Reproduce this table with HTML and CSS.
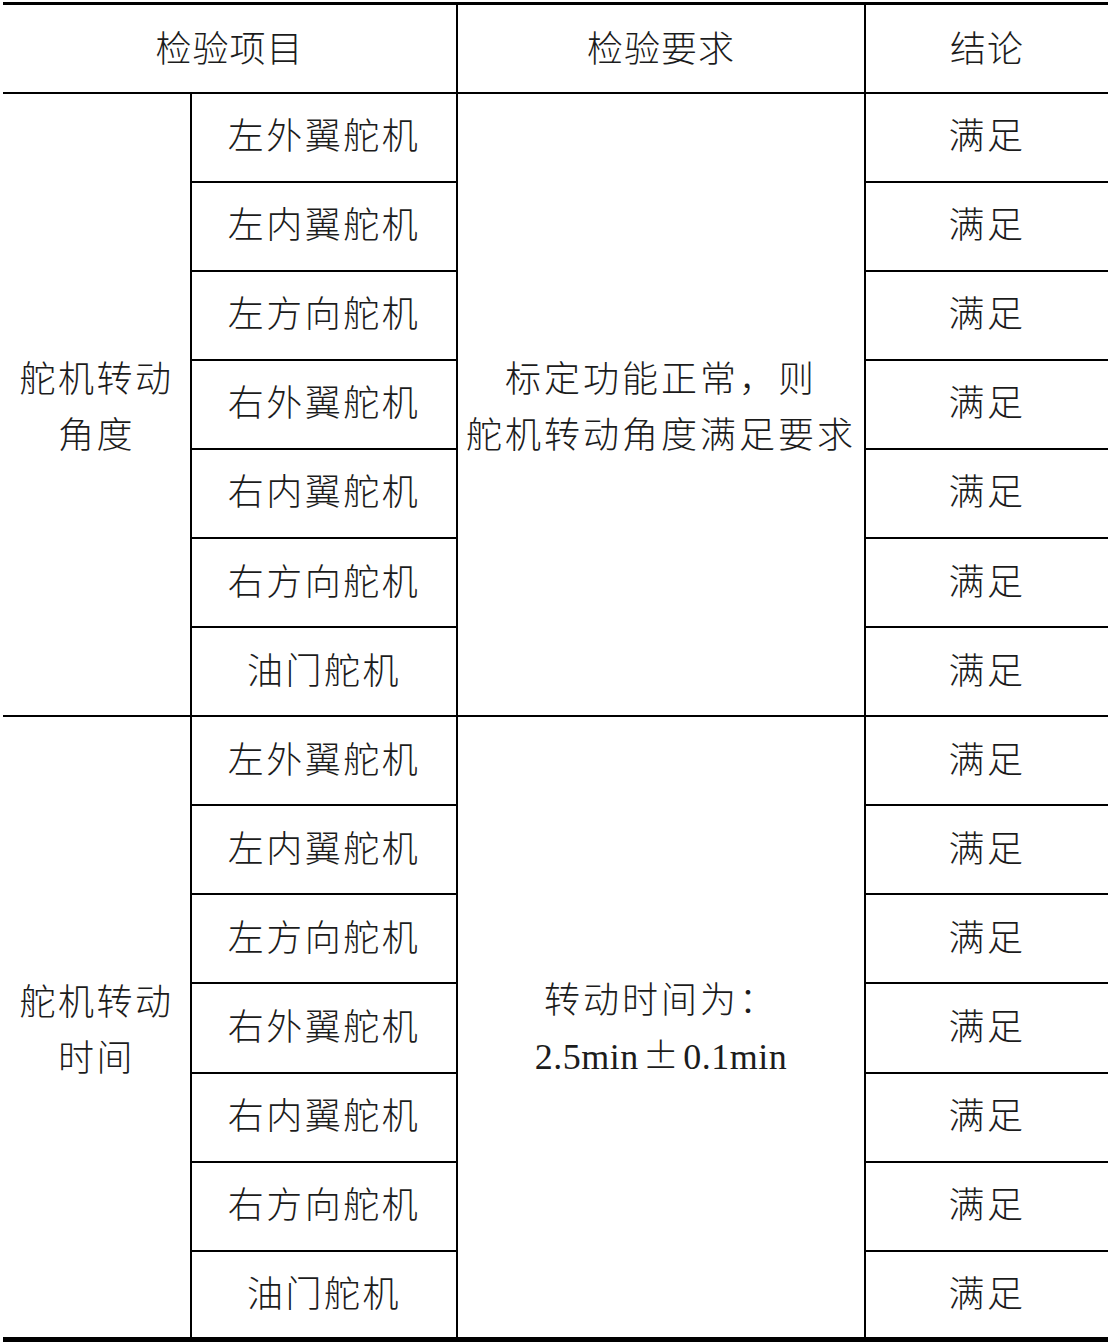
FILE: index.html
```html
<!DOCTYPE html>
<html lang="zh-CN">
<head>
<meta charset="utf-8">
<title>检验结果</title>
<link rel="stylesheet" href="styles.css">
</head>
<body>
<table class="report">
  <colgroup>
    <col class="c1"><col class="c2"><col class="c3"><col class="c4">
  </colgroup>
  <thead>
    <tr class="head">
      <th colspan="2">检验项目</th>
      <th>检验要求</th>
      <th>结论</th>
    </tr>
  </thead>
  <tbody>
    <tr>
      <td rowspan="7" class="group">舵机转动<br>角度</td>
      <td>左外翼舵机</td>
      <td rowspan="7" class="req">标定功能正常，则<br>舵机转动角度满足要求</td>
      <td>满足</td>
    </tr>
    <tr><td>左内翼舵机</td><td>满足</td></tr>
    <tr><td>左方向舵机</td><td>满足</td></tr>
    <tr><td>右外翼舵机</td><td>满足</td></tr>
    <tr><td>右内翼舵机</td><td>满足</td></tr>
    <tr><td>右方向舵机</td><td>满足</td></tr>
    <tr><td>油门舵机</td><td>满足</td></tr>
    <tr>
      <td rowspan="7" class="group">舵机转动<br>时间</td>
      <td>左外翼舵机</td>
      <td rowspan="7" class="req">转动时间为：<br><span class="num">2.5min<span class="pm">±</span>0.1min</span></td>
      <td>满足</td>
    </tr>
    <tr><td>左内翼舵机</td><td>满足</td></tr>
    <tr><td>左方向舵机</td><td>满足</td></tr>
    <tr><td>右外翼舵机</td><td>满足</td></tr>
    <tr><td>右内翼舵机</td><td>满足</td></tr>
    <tr><td>右方向舵机</td><td>满足</td></tr>
    <tr><td>油门舵机</td><td>满足</td></tr>
  </tbody>
</table>
</body>
</html>
```

FILE: styles.css
```css
html, body {
  margin: 0;
  padding: 0;
  background: #ffffff;
}

.report {
  margin: 2px 0 0 3px;
  width: 1105px;
  border-collapse: collapse;
  table-layout: fixed;
  font-family: "Noto Sans CJK SC", "Noto Sans CJK JP", sans-serif;
  font-weight: 300;
  font-size: 36px;
  color: #1c1c1c;
  border-top: 3px solid #000;
  border-bottom: 5px solid #000;
}

.c1 { width: 188px; }
.c2 { width: 266px; }
.c3 { width: 408px; }
.c4 { width: 243px; }

.report th,
.report td {
  box-sizing: border-box;
  border: 2px solid #000;
  padding: 0 0 8px 0;
  text-align: center;
  vertical-align: middle;
  white-space: nowrap;
  letter-spacing: 2.5px;
  line-height: 56px;
  height: 89.1px;
  font-weight: 300;
}

.report tr > :first-child { border-left: none; }
.report tr > :last-child { border-right: none; }
.report td.group { border-left: none; }

.report th {
  letter-spacing: 1px;
  height: 89px;
  padding-bottom: 5px;
}

.report thead th { border-top: 3px solid #000; }

.report td.group,
.report td.req {
  padding-bottom: 0;
}

.report td.req {
  letter-spacing: 3px;
}

.num {
  font-family: "Liberation Serif", "Times New Roman", serif;
  letter-spacing: 0.5px;
  font-weight: 400;
}

.pm {
  font-family: "Noto Sans CJK SC", sans-serif;
  font-weight: 300;
  padding: 0 4px;
}
```
